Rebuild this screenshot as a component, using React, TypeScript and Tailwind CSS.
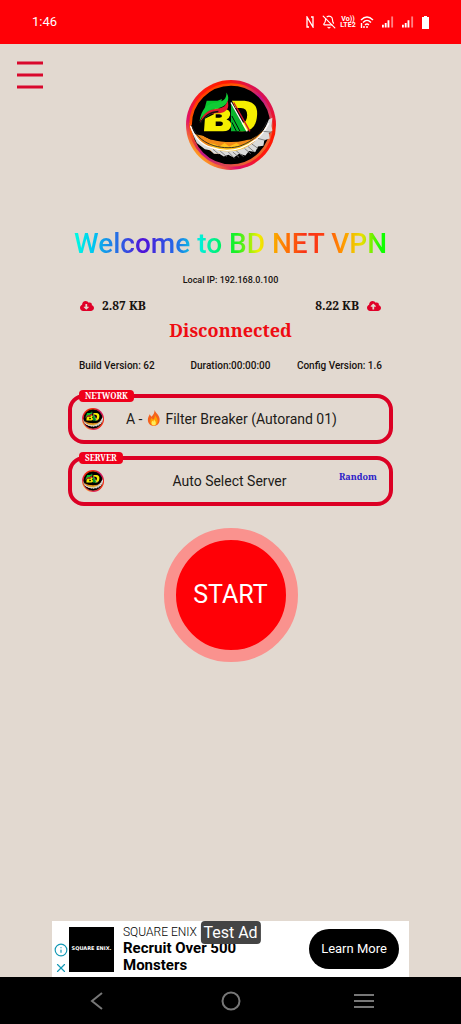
import { BellOff, Info, X } from 'lucide-react'
import { FaCloudDownloadAlt, FaCloudUploadAlt } from 'react-icons/fa'

const Logo = ({ className }: { className: string }) => {
  return (
    <svg viewBox="0 0 100 100" className={className} aria-label="BD NET VPN" role="img">
      <defs>
        <linearGradient id="ring" x1="0.1" y1="0.8" x2="0.8" y2="0.1">
          <stop offset="0" stopColor="#ff9a1f" />
          <stop offset="0.2" stopColor="#e0106a" />
          <stop offset="0.5" stopColor="#ff1a10" />
          <stop offset="0.8" stopColor="#ff1a00" />
          <stop offset="1" stopColor="#d8105a" />
        </linearGradient>
        <linearGradient id="ringInner" x1="0" y1="0" x2="1" y2="1">
          <stop offset="0" stopColor="#ff2a00" />
          <stop offset="0.3" stopColor="#ff5a00" />
          <stop offset="0.5" stopColor="#c0128a" />
          <stop offset="1" stopColor="#ff8a00" />
        </linearGradient>
      </defs>
      <circle cx="50" cy="50" r="50" fill="url(#ring)" />
      <circle cx="50" cy="50" r="45" fill="#000" stroke="url(#ringInner)" strokeWidth="3" />
      {/* glow behind the feather */}
      <path d="M9 60l10 2 8 4h45l12-8 6-8 2 2-8 18-24 12H32L14 70z" fill="#f08a18" />
      <path d="M24 70l8 1 5 3 6-4 5 4 8-4 5 3 8-4 8-2-12 9-14 6H38z" fill="#ffc21c" />
      <path d="M8 44h84l-6 12q-12 13-36 13T14 58z" fill="#000" />
      {/* feather */}
      <path d="M4 47C7 60 13 68 22 73c10 5 23 8 36 5 16-5 27-15 34-34l4-2-1 9 1 5-4 3 1 6-6 2-1 6-6 1-3 6-7-1-4 5-7-2-6 4-6-3-5 2-5-3-6 0-4-4-6-1-5-4-4-3C13 71 6 60 4 47z" fill="#dadada" />
      <path d="M5 51c5 14 13 21 23 24 11 4 22 4 32 1 14-5 25-14 32-28" stroke="#fff" strokeWidth="1.500" fill="none" />
      <path d="M6 50c6 15 16 20 25 23 11 3 21 3 30 0 13-5 23-13 29-27" stroke="#222" strokeWidth="1" fill="none" />
      <path d="M30 77l6 5M38 79l7 6M47 80l7 7M56 79l8 6M65 76l7 6M73 71l7 5M80 65l8 2M86 57l9 1M52 80l7 6M69 74l7 6" stroke="#777" strokeWidth="1" />
      {/* letters */}
      <path d="M23 23h12l5-2-3 10-20 14z" fill="#08c52c" />
      <path d="M32 32h10q8 1 7 7-1 4-4 5 6 2 5 7-1 6-9 6H20l1-14 10-5zm1 6v4h4q3 0 3-2t-3-2zm0 8v5h5q3 0 3-3 0-2-3-2z" fill="#f5ee00" fillRule="evenodd" />
      <path d="M51 23h14q15 1 14 16-1 18-16 18h-4l-3-9h6q6-1 6-9 0-8-7-8H55z" fill="#f5ee00" />
      <path d="M50 26l17 31H50z" fill="#08b52d" />
      <path d="M51 40l9 17M51 47l5 10" stroke="#000" strokeWidth="1" />
      <path d="M50 25l18 32" stroke="#fff" strokeWidth="1.500" fill="none" />
      <path d="M53 25l18 32" stroke="#d4142b" strokeWidth="1.500" fill="none" />
      {/* flame of three strips */}
      <path d="M15 46c2-14 9-20 19-21 8-1 11-4 11-11 5 8 0 16-9 17-10 0-15 4-21 15z" fill="#10cc35" />
      <path d="M15 48c5-13 11-15 20-16 7-1 10-4 11-9 3 8-1 13-9 14-10 0-16 2-22 11z" fill="#e01c2d" />
      <path d="M16 48c6-10 11-12 20-13" stroke="#111" strokeWidth="1.500" fill="none" />
    </svg>
  )
}

const Signal = () => {
  return (
    <svg viewBox="0 0 13 12" className="h-3 w-3" fill="#fff">
      <path d="M0 9h2v3H0zM3 7h2v5H3zM6 4h2v8H6z" />
      <path d="M10 0h2v12h-2z" opacity="0.5" />
    </svg>
  )
}

const StatusBar = () => {
  return (
    <header className="flex h-11 items-center justify-between bg-[#ff0006] px-8 text-white">
      <time className="text-[13px]">1:46</time>
      <div className="flex items-center">
        <svg viewBox="0 0 8 12" className="mr-2 h-3 w-2" fill="none" stroke="#fff" strokeWidth="1.3">
          <path d="M3 11H1V1l6 10V1H5" />
        </svg>
        <BellOff className="mr-1 size-3.5" />
        <div className="mr-1 w-4 text-center text-[7px] leading-[6px] font-bold">
          <div>Vo))</div>
          <div>LTE2</div>
        </div>
        <svg viewBox="0 0 14 12" className="mr-2 h-3 w-3.5" fill="none" stroke="#fff" strokeWidth="1.4">
          <path d="M1 4c4-4 8-4 12 0M3 6.500c3-3 5-3 8 0M5 9c1.500-1.500 2.500-1.500 4 0" />
          <path d="M7 10v2M1.500 7v5M4 10v2" />
        </svg>
        <Signal />
        <div className="w-2" />
        <Signal />
        <svg viewBox="0 0 7 13" className="ml-2 h-[13px] w-[7px]" fill="#fff">
          <path d="M2 0h3v1h2v12H0V1h2z" />
        </svg>
      </div>
    </header>
  )
}

const Flame = () => {
  return (
    <svg viewBox="0 0 24 26" className="inline-block h-4 w-4 align-[-2px]">
      <path d="M13 0c2 6 7 7 8 14 1 7-3 12-9 12S2 22 2 16c0-4 2-6 3-9 1 2 2 3 3 4 3-3 5-6 5-11z" fill="#f4611e" />
      <path d="M13 6c1 5 5 6 5 12 0 5-3 7-6 7s-6-2-6-6c0-3 1-4 2-6l3 3c2-3 3-5 2-10z" fill="#ffa000" />
      <path d="M12 15c1 3 3 3 3 6s-1 4-3 4-4-1-4-4c0-2 1-2 1-4l2 2z" fill="#ffeb5a" />
    </svg>
  )
}

type PickerProps = {
  label: string
  note?: string
  children: React.ReactNode
}

const Picker = ({ label, note, children }: PickerProps) => {
  return (
    <button className="relative grid h-[50px] w-full grid-cols-[44px_1fr_44px] items-center rounded-2xl border-4 border-[#dc0024] pr-3 pl-2.5 text-[14px] text-[#211b18]">
      <span className="absolute -top-2 left-[7px] rounded-sm bg-[#ef001b] px-1.5 font-['Noto_Serif','DejaVu_Serif_Condensed','DejaVu_Serif',serif] text-[8px] leading-3 font-bold text-white">
        {label}
      </span>
      <Logo className="size-[22px]" />
      <span className="whitespace-nowrap">{children}</span>
      {note && (
        <span className="justify-self-end pb-2 font-['Noto_Serif','DejaVu_Serif_Condensed','DejaVu_Serif',serif] text-[9px] font-bold text-[#2a20c8]">
          {note}
        </span>
      )}
    </button>
  )
}

const AdBanner = () => {
  return (
    <aside className="relative mx-[52px] mt-auto flex h-14 items-center bg-white pr-2.5 text-black">
      <div className="flex w-[17px] flex-col items-center gap-1 self-end pb-0.5 text-[#1499b5]">
        <Info className="size-3.5" />
        <X className="size-3.5" />
      </div>
      <div className="flex size-[45px] items-center justify-center bg-black font-['DejaVu_Sans'] text-[5px] font-bold text-white">
        SQUARE ENIX.
      </div>
      <div className="ml-[9px] flex-1">
        <p className="text-[12px] leading-4 font-light">SQUARE ENIX</p>
        <p className="w-32 text-[15px] leading-[17px] font-bold">Recruit Over 500 Monsters</p>
      </div>
      <button className="h-10 w-[90px] rounded-full bg-black text-[13px] text-white">Learn More</button>
      <span className="absolute top-0 left-1/2 -translate-x-1/2 rounded-sm bg-[#444] px-[3px] text-base leading-[23px] whitespace-nowrap text-white">
        Test Ad
      </span>
    </aside>
  )
}

const NavBar = () => {
  return (
    <nav className="flex h-[47px] items-center justify-between bg-black px-[87px] text-[#777]">
      <button aria-label="Back">
        <svg viewBox="0 0 20 20" className="size-5" fill="none" stroke="currentColor" strokeWidth="2">
          <path d="M15 2L5 10l10 8" />
        </svg>
      </button>
      <button aria-label="Home">
        <svg viewBox="0 0 20 20" className="size-5" fill="none" stroke="currentColor" strokeWidth="2">
          <circle cx="10" cy="10" r="8.500" />
        </svg>
      </button>
      <button aria-label="Recent apps">
        <svg viewBox="0 0 20 20" className="size-5" fill="none" stroke="currentColor" strokeWidth="2">
          <path d="M0 4h20M0 10h20M0 16h20" />
        </svg>
      </button>
    </nav>
  )
}

const App = () => {
  return (
    <div className="flex min-h-screen flex-col bg-[#e2d9d0] font-['Roboto',sans-serif] text-[#17120f]">
      <StatusBar />

      <main className="flex flex-1 flex-col">
        {/* Menu and logo */}
        <div className="grid grid-cols-[1fr_auto_1fr] items-start">
          <button aria-label="Menu" className="mt-4 ml-4 w-7">
            <svg viewBox="0 0 28 30" className="w-7" stroke="#d9082c" strokeWidth="3">
              <path d="M1 3h26M1 15h26M1 27h26" />
            </svg>
          </button>
          <Logo className="mt-9 size-[90px]" />
        </div>

        <h1 className="mx-auto mt-14 bg-[linear-gradient(90deg,#00ffe0_0%,#00c8f0_6%,#5010d8_22%,#2070e8_33%,#00f0e0_40%,#00f050_48%,#20f020_52%,#f0f000_59%,#ff8000_67%,#f83018_74%,#ff4010_80%,#ff9a00_86%,#e8e000_92%,#10ff00_98%)] bg-clip-text text-[28px] leading-9 font-medium whitespace-nowrap text-transparent">
          Welcome to BD NET VPN
        </h1>
        <p className="mt-3 text-center text-[9px] leading-3 font-medium">Local IP: 192.168.0.100</p>

        {/* Traffic */}
        <div className="mx-20 mt-3 flex items-center justify-between font-['Noto_Serif','DejaVu_Serif_Condensed','DejaVu_Serif',serif] text-[12px] leading-4 font-bold">
          <span className="flex items-center gap-2">
            <FaCloudDownloadAlt className="size-3.5 text-[#e00028]" />
            2.87 KB
          </span>
          <span className="flex items-center gap-2">
            8.22 KB
            <FaCloudUploadAlt className="size-3.5 text-[#e00028]" />
          </span>
        </div>
        <p className="mt-1 text-center font-['Noto_Serif','DejaVu_Serif_Condensed','DejaVu_Serif',serif] text-[18px] leading-6 font-bold text-[#ef0b12]">
          Disconnected
        </p>

        <div className="mx-[79px] mt-4 grid grid-cols-[1fr_auto_1fr] text-[10px] leading-4 font-medium">
          <span>Build Version: 62</span>
          <span>Duration:00:00:00</span>
          <span className="text-right">Config Version: 1.6</span>
        </div>

        <div className="mx-[68px] mt-5 flex flex-col gap-3">
          <Picker label="NETWORK">
            A - <Flame /> Filter Breaker (Autorand 01)
          </Picker>
          <Picker label="SERVER" note="Random">
            Auto Select Server
          </Picker>
        </div>

        <button className="mx-auto mt-[22px] size-[134px] rounded-full border-[12px] border-[#fa928e] bg-[#ff0006] text-[25px] text-white">
          START
        </button>

        <AdBanner />
      </main>

      <NavBar />
    </div>
  )
}

export default App
